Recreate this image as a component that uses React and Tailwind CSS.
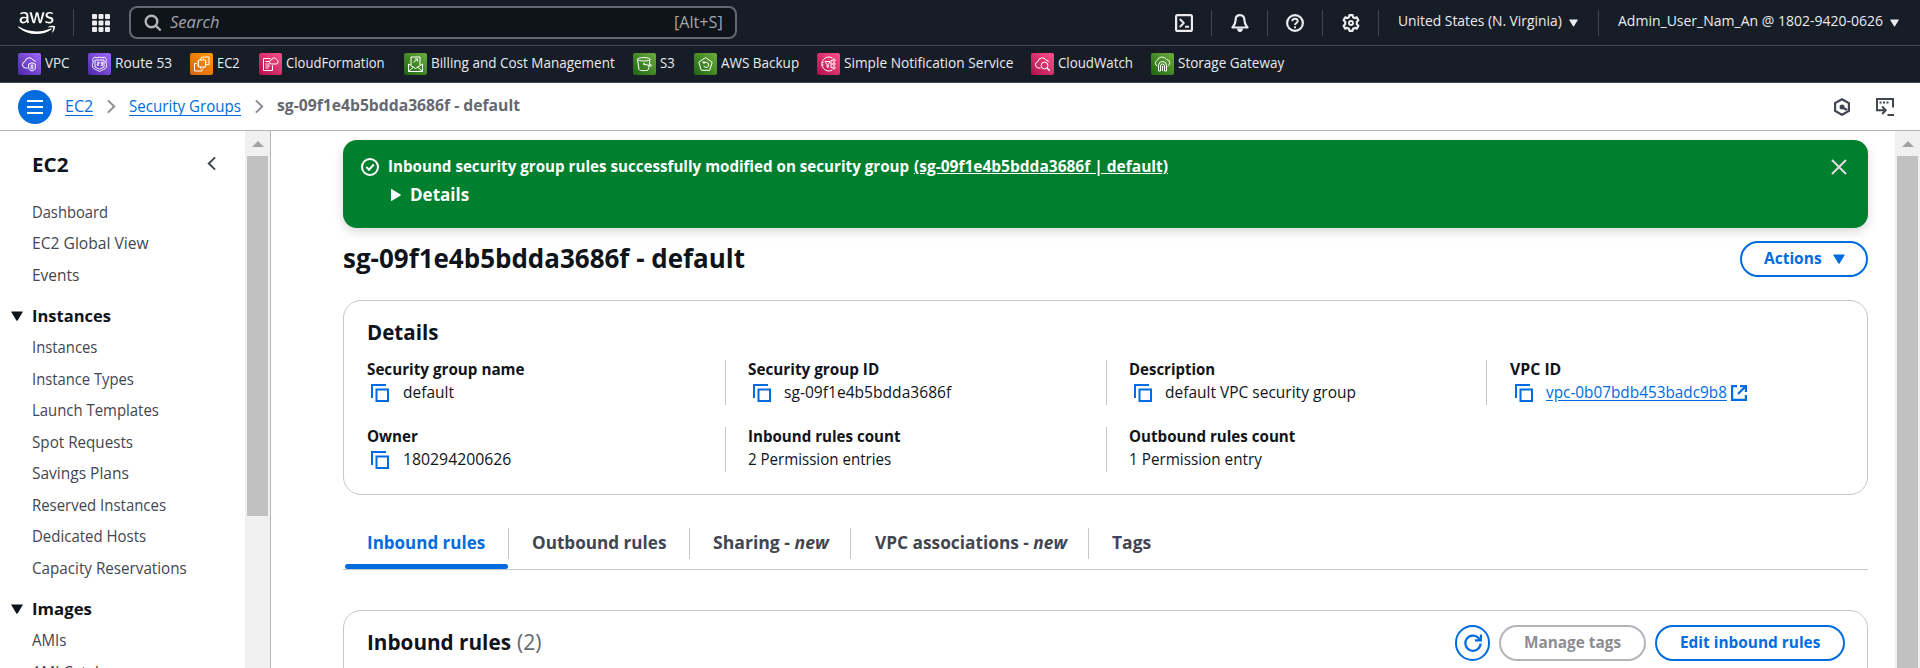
import { useLayoutEffect, useRef, useState } from "react";
import { FaAws } from "react-icons/fa";

/* Text set to a fixed measure: glyphs are condensed or widened to fill `w` pixels. */
function Fit({ w, className = "", children }) {
  const ref = useRef(null);
  const [scale, setScale] = useState(1);
  useLayoutEffect(() => {
    const natural = ref.current.offsetWidth;
    if (natural) setScale(w / natural);
  }, [w]);
  return (
    <span className={`inline-block shrink-0 whitespace-nowrap ${className}`} style={{ width: w }}>
      <span ref={ref} className="inline-block origin-left" style={{ transform: `scaleX(${scale})` }}>
        {children}
      </span>
    </span>
  );
}

function Down({ className }) {
  return (
    <svg viewBox="0 0 12 10" className={className} fill="currentColor">
      <path d="M.8.4h10.4c.5 0 .7.5.4.9L6.6 9.4c-.3.5-.9.5-1.2 0L.4 1.3C.1.9.3.4.8.4z" />
    </svg>
  );
}

const GRADIENTS = {
  purple: "bg-linear-to-tr from-[#4d27a8] to-[#a166ff]",
  orange: "bg-linear-to-tr from-[#d6620f] to-[#ff9900]",
  pink: "bg-linear-to-tr from-[#b0084d] to-[#ff4f8b]",
  green: "bg-linear-to-tr from-[#1b660f] to-[#6cae3e]",
};

const GLYPHS = {
  vpc: (
    <>
      <path d="M9.500 15H7.500a3.300 3.300 0 0 1-.5-6.500A4.300 4.300 0 0 1 15 7a2.600 2.600 0 0 1 2.500 2" />
      <path d="M14 9.800l3.300 1.200v4c0 1.500-1.300 2.300-3.300 3-2-.7-3.300-1.500-3.300-3v-4z M13.200 11.500v5M14.800 11.500v5" />
    </>
  ),
  route: (
    <>
      <path d="M6.500 4l2.500.9L11.500 4l2.500.9 2.500-.9 2 2.500-.8 2.500c.8 1.500 1.200 3 .6 5-.8 2.500-4.300 2.700-6.800 4.500-2.500-1.800-6-2-6.800-4.500-.6-2-.2-3.500.6-5L4.500 6.500z" />
      <path d="M7 7h9v7l-4.500 2.200L7 14z M9 9.200h2v1.600H9.200v1.500H11M12.500 9.200h1.800v3.100h-1.800M13 10.700h1.300" />
    </>
  ),
  ec2: (
    <>
      <path d="M8.500 7h7v7h-7z M8.500 9H7M8.500 12H7M15.500 9H17M15.500 12H17M10.500 7V5.500M13.500 7V5.500M10.500 14v1.500M13.500 14v1.500" />
      <path d="M11.500 5.500V4H19v7.500h-2 M7 10.500H4.500V18H12v-2.500" />
    </>
  ),
  cfn: (
    <>
      <path d="M11.500 5.500H4.500v12h9v-5 M6.500 8.500h3.500M6.500 11h4M6.500 13h4.500M6.500 15h3" />
      <path d="M12.500 11a2 2 0 0 1 0-4 2.600 2.600 0 0 1 5-.3 2.200 2.200 0 0 1-.3 4.300z" />
    </>
  ),
  billing: (
    <>
      <path d="M4.500 11v7.500h14V11 M4.500 11l7 4.500 7-4.500 M4.500 18.500l5-4.500M18.500 18.500l-5-4.500M7 12.500V4h9v8.500" />
      <path d="M9.500 9.500l4-3.500M11 6h2.500v2.500" />
    </>
  ),
  s3: (
    <>
      <path d="M4.500 6.500L6 16.500c.3 1.500 9.200 1.500 9.500 0l1.500-10" />
      <ellipse cx="10.800" cy="6.300" rx="6.300" ry="1.700" />
      <path d="M11 11l6.500 2c1.500.5 1.800-.8.3-1.500l-1.300-.5" />
      <circle cx="11" cy="11" r=".6" />
    </>
  ),
  backup: (
    <>
      <path d="M11.500 4.500l6.700 4.800-2.500 8H7.300l-2.500-8z" />
      <path d="M9 9.500h3.500a2.500 2.500 0 1 1-2.700 3.300M10.500 8L9 9.500l1.500 1.500" />
    </>
  ),
  sns: (
    <>
      <path d="M15.500 5A7 7 0 1 0 15.500 17M4.500 9.500h2M4.500 12h2M8 8.500h5l-1.800 3v3l-1.200-.7v-2.300z" />
      <circle cx="17" cy="7.200" r="1.200" />
      <circle cx="17" cy="11" r="1.200" />
      <circle cx="17" cy="14.800" r="1.200" />
      <path d="M15.800 11H14v-3.500h1.700M14 11v3.700h1.700" />
    </>
  ),
  cw: (
    <>
      <path d="M9.500 15H7.500a3.300 3.300 0 0 1-.5-6.500A4.300 4.300 0 0 1 15 7a2.600 2.600 0 0 1 2.500 2" />
      <circle cx="13.500" cy="12.500" r="3.400" />
      <path d="M16 15l2.800 2.700" strokeWidth="1.500" />
    </>
  ),
  sgw: (
    <>
      <path d="M6.300 13a3 3 0 0 1-.2-5.500A5.200 5.200 0 0 1 15.500 6.500a3.400 3.400 0 0 1 1.200 6.500" />
      <path d="M7.500 18v-5.500a4 4 0 0 1 8 0V18h-2v-5a2 2 0 0 0-4 0v5z M11.500 13v5" />
    </>
  ),
};

const FAVORITES = [
  ["VPC", 25, "vpc", "purple", "w-[70px]"],
  ["Route 53", 57, "route", "purple", "w-[102px]"],
  ["EC2", 23, "ec2", "orange", "w-[69px]"],
  ["CloudFormation", 99, "cfn", "pink", "w-[145px]"],
  ["Billing and Cost Management", 184, "billing", "green", "w-[229px]"],
  ["S3", 15, "s3", "green", "w-[61px]"],
  ["AWS Backup", 78, "backup", "green", "w-[123px]"],
  ["Simple Notification Service", 170, "sns", "pink", "w-[214px]"],
  ["CloudWatch", 75, "cw", "pink", "w-[120px]"],
  ["Storage Gateway", 106, "sgw", "green", "w-[140px]"],
];

function HeaderIcon({ children, width }) {
  return (
    <div className={`flex h-[26px] items-center justify-center border-r border-[#424650] ${width}`}>
      <svg viewBox="0 0 18 18" className="size-[18px]" fill="none" stroke="#ebebf0" strokeWidth="2.2" strokeLinejoin="round">
        {children}
      </svg>
    </div>
  );
}

function TopBar() {
  return (
    <div className="flex h-[46px] items-center border-b border-[#424650] text-[14px] text-[#ebebf0]">
      <FaAws className="ml-[18px] h-[30px] w-[37px] text-white" />
      <div className="ml-[18px] h-[27px] w-px bg-[#424650]" />
      <svg viewBox="0 0 18 18" className="ml-[18px] size-[18px]" fill="#ebebf0">
        {[0, 6.5, 13].map((y) =>
          [0, 6.5, 13].map((x) => <rect key={`${x}-${y}`} x={x} y={y} width="5" height="5" rx="1" />)
        )}
      </svg>
      <div className="ml-[19px] flex h-[33px] w-[608px] items-center rounded-[8px] border-2 border-[#656871] bg-[#0f141a] pr-[12px] pl-[13px] text-[15.5px] text-[#a4a4ad]">
        <svg viewBox="0 0 18 18" className="size-[18px]" fill="none" stroke="#b4b4bb" strokeWidth="2.4">
          <circle cx="7.500" cy="7.500" r="5.800" />
          <path d="M11.700 11.700l5 4.800" />
        </svg>
        <Fit w={49} className="ml-[8px] italic">Search</Fit>
        <Fit w={49} className="ml-auto">[Alt+S]</Fit>
      </div>
      <div className="ml-auto flex items-center">
        <HeaderIcon width="w-[56px]">
          <rect x="1.100" y="1.100" width="15.800" height="15.800" rx="1.500" />
          <path d="M4.800 5l4 4-4 4M10 12.700h4" strokeWidth="1.900" />
        </HeaderIcon>
        <HeaderIcon width="w-[56px]">
          <path d="M9 1.200C6 1.200 4.600 3.200 4.600 6c0 4-1.500 5.500-3.100 7.500h15c-1.600-2-3.100-3.500-3.100-7.500 0-2.800-1.400-4.800-4.400-4.800z" />
          <path d="M6 14.500c0 4.800 6 4.800 6 0z" fill="#ebebf0" stroke="none" />
        </HeaderIcon>
        <HeaderIcon width="w-[55px]">
          <circle cx="9" cy="9" r="7.900" />
          <path d="M6.300 7.300c0-3.600 5.400-3.300 5.400-.3 0 2-2.700 1.900-2.700 4M9 12.300v2" strokeWidth="1.900" />
        </HeaderIcon>
        <HeaderIcon width="w-[56px]">
          <path d="M7.400 1.200h3.200l.5 2 1.500.9 2.200-.7 1.600 2.800-1.600 1.500v2.600l1.600 1.500-1.600 2.800-2.200-.7-1.500.9-.5 2H7.400l-.5-2-1.500-.9-2.200.7-1.600-2.800 1.600-1.500V7.700L1.600 6.200l1.600-2.800 2.200.7 1.500-.9z" />
          <circle cx="9" cy="9" r="2" strokeWidth="1.900" />
        </HeaderIcon>
        <div className="flex h-[26px] w-[220px] items-center border-r border-[#424650] pb-[4px] pl-[19px]">
          <Fit w={164}>United States (N. Virginia)</Fit>
          <Down className="mt-[5px] ml-[7px] h-[8px] w-[9px]" />
        </div>
        <div className="flex h-[26px] w-[321px] items-center pb-[4px] pl-[19px]">
          <Fit w={265}>Admin_User_Nam_An @ 1802-9420-0626</Fit>
          <Down className="mt-[5px] ml-[7px] h-[8px] w-[9px]" />
        </div>
      </div>
    </div>
  );
}

function Favorites() {
  return (
    <div className="flex h-[37px] items-center border-b border-[#424650] pl-[18px] text-[14px] text-[#ebebf0]">
      {FAVORITES.map(([label, w, glyph, color, width]) => (
        <div key={label} className={`flex shrink-0 items-center gap-[4px] ${width}`}>
          <span className={`h-[22px] w-[23px] shrink-0 rounded-[2px] ${GRADIENTS[color]}`}>
            <svg viewBox="0 0 23 22" className="h-[22px] w-[23px]" fill="none" stroke="#fff" strokeWidth="1" strokeLinejoin="round">
              {GLYPHS[glyph]}
            </svg>
          </span>
          <Fit w={w} className="pb-[3px]">{label}</Fit>
        </div>
      ))}
    </div>
  );
}

function Chevron({ className }) {
  return (
    <svg viewBox="0 0 10 16" className={className} fill="none" stroke="currentColor" strokeWidth="2.2">
      <path d="M1 1.200L8 8l-7 6.800" />
    </svg>
  );
}

function Breadcrumbs() {
  return (
    <div className="flex h-[48px] items-center border-b border-[#b4b4bb] bg-white pl-[18px] text-[15.5px]">
      <div className="flex size-[34px] items-center justify-center rounded-full bg-[#006ce0]">
        <svg viewBox="0 0 16 14" className="h-[14px] w-[16px]" stroke="#fff" strokeWidth="2">
          <path d="M0 1h16M0 7h16M0 13h16" />
        </svg>
      </div>
      <Fit w={28} className="ml-[13px] h-[19px] border-b border-[#006ce0] leading-[18px] text-[#006ce0]">EC2</Fit>
      <Chevron className="ml-[14px] h-[15px] w-[9px] text-[#8c8c94]" />
      <Fit w={112} className="ml-[13px] h-[19px] border-b border-[#006ce0] leading-[18px] text-[#006ce0]">Security Groups</Fit>
      <Chevron className="ml-[14px] h-[15px] w-[9px] text-[#8c8c94]" />
      <Fit w={243} className="ml-[13px] pb-[1px] font-bold text-[#656871]">sg-09f1e4b5bdda3686f - default</Fit>
      <svg viewBox="0 0 18 18" className="mr-[25px] ml-auto size-[18px]" fill="none" stroke="#424650" strokeWidth="2.200">
        <path d="M9 1.200l6.900 3.900v7.800L9 16.800l-6.900-3.900V5.100z" />
        <circle cx="9" cy="9" r="2.500" fill="#424650" stroke="none" />
        <path d="M9 9l5 3" />
      </svg>
      <svg viewBox="0 0 18 18" className="mr-[26px] size-[18px]" fill="none" stroke="#424650" strokeWidth="2">
        <path d="M3.500 12.200H1V1h16v8.500" />
        <path d="M3.500 4.500h2M7 4.500h2M10.500 4.500h2" strokeWidth="2" />
        <path d="M3 12.200h6.500M6.200 8.500l3.500 3.700-3.500 3.800M11.500 17H18" />
      </svg>
    </div>
  );
}

function Scrollbar({ className, thumb }) {
  return (
    <div className={`flex shrink-0 flex-col items-center bg-[#f0f0f0] ${className}`}>
      <svg viewBox="0 0 12 6" className="mt-[10px] mb-[9px] h-[6px] w-[12px] shrink-0" fill="#a3a3a3">
        <path d="M6 0l6 6H0z" />
      </svg>
      <div className={`w-[21px] shrink-0 bg-[#c1c1c1] ${thumb}`} />
    </div>
  );
}

const NAV_TOP = [["Dashboard", 76], ["EC2 Global View", 117], ["Events", 47]];
const NAV_INSTANCES = [
  ["Instances", 65],
  ["Instance Types", 102],
  ["Launch Templates", 127],
  ["Spot Requests", 101],
  ["Savings Plans", 97],
  ["Reserved Instances", 134],
  ["Dedicated Hosts", 114],
  ["Capacity Reservations", 155],
];
const NAV_IMAGES = [["AMIs", 34], ["AMI Catalog", 84]];

function NavList({ items }) {
  return items.map(([label, w]) => (
    <div key={label} className="flex h-[31.5px] items-center pl-[32px]">
      <Fit w={w}>{label}</Fit>
    </div>
  ));
}

function NavHeading({ label, w }) {
  return (
    <div className="mt-[9.5px] flex h-[31.5px] items-center pl-[11px] text-[16.5px] font-bold text-[#0f141a]">
      <Down className="h-[10px] w-[12px]" />
      <Fit w={w} className="ml-[9px]">{label}</Fit>
    </div>
  );
}

function Sidebar() {
  return (
    <aside className="flex w-[271px] shrink-0 border-r border-[#b4b4bb]">
      <div className="h-full flex-1 overflow-hidden text-[15.5px] text-[#424650]">
        <div className="flex items-center pt-[19px] pr-[29px] pl-[32px] text-[#0f141a]">
          <Fit w={36} className="text-[20px] leading-[30px] font-bold">EC2</Fit>
          <Chevron className="mb-[3px] ml-auto h-[15px] w-[9px] rotate-180 text-[#424650]" />
        </div>
        <div className="mt-[16.5px]">
          <NavList items={NAV_TOP} />
          <NavHeading label="Instances" w={79} />
          <NavList items={NAV_INSTANCES} />
          <NavHeading label="Images" w={60} />
          <NavList items={NAV_IMAGES} />
        </div>
      </div>
      <Scrollbar className="w-[25px]" thumb="h-[360px]" />
    </aside>
  );
}

function Flash() {
  return (
    <div className="mt-[9px] flex h-[88px] shrink-0 items-start rounded-[14px] bg-[#00802f] pt-[18px] pr-[21px] pl-[18px] text-white shadow-[0_4px_10px_1px_rgba(0,7,22,0.13)]">
      <svg viewBox="0 0 18 18" className="size-[18px]" fill="none" stroke="#fff" strokeWidth="2">
        <circle cx="9" cy="9" r="8" />
        <path d="M5.300 9l2.700 2.700 4.800-5.200" />
      </svg>
      <div className="ml-[9px] flex flex-col">
        <div className="flex text-[15.5px] leading-[16px] font-bold">
          <Fit w={521}>Inbound security group rules successfully modified on security group</Fit>
          <Fit w={254} className="ml-[5px] [&>span]:underline [&>span]:underline-offset-1">(sg-09f1e4b5bdda3686f | default)</Fit>
        </div>
        <div className="mt-[10px] flex items-center pl-[3px] text-[17px] leading-[22px] font-bold">
          <svg viewBox="0 0 10 12" className="h-[12px] w-[10px]" fill="#fff">
            <path d="M0 .6C0 .1.5-.1.9.2l8.600 5.200c.5.3.5.9 0 1.200L.9 11.800c-.4.3-.9.1-.9-.4z" />
          </svg>
          <Fit w={59} className="ml-[9px]">Details</Fit>
        </div>
      </div>
      <svg viewBox="0 0 16 16" className="mt-[1px] ml-auto size-[16px]" stroke="#dedee3" strokeWidth="2">
        <path d="M1 1l14 14M15 1L1 15" />
      </svg>
    </div>
  );
}

function CopyIcon({ className }) {
  return (
    <svg viewBox="0 0 18 18" className={`size-[18px] shrink-0 ${className}`} fill="none" stroke="#006ce0" strokeWidth="2">
      <path d="M1 14V1h14" />
      <rect x="5.500" y="5.500" width="11.500" height="11.500" />
    </svg>
  );
}

function Field({ label, w, copy, first, className, children }) {
  return (
    <div className={`h-[45px] ${first ? "" : "border-l border-[#c6c6cd] pl-[22px]"} ${className}`}>
      <div className="flex h-[20px] items-center text-[15.5px] font-bold">
        <Fit w={w}>{label}</Fit>
      </div>
      <div className="flex h-[25px] items-center text-[15.5px]">
        {copy && <CopyIcon className={first ? "mr-[14px] ml-[4px]" : "mr-[13px] ml-[5px]"} />}
        {children}
      </div>
    </div>
  );
}

function DetailsCard() {
  return (
    <section className="mt-[23px] h-[195px] shrink-0 rounded-[18px] border border-[#c6c6cd] pt-[16px] pl-[23px]">
      <Fit w={71} className="block text-[22px] leading-[28px] font-bold">Details</Fit>
      <div className="mt-[14px] flex">
        <Field label="Security group name" w={158} copy first className="w-[358px]"><Fit w={51}>default</Fit></Field>
        <Field label="Security group ID" w={131} copy className="w-[381px]"><Fit w={167}>sg-09f1e4b5bdda3686f</Fit></Field>
        <Field label="Description" w={86} copy className="w-[380px]"><Fit w={191}>default VPC security group</Fit></Field>
        <Field label="VPC ID" w={51} copy className="w-[360px] pl-[23px]">
          <Fit w={181} className="text-[#006ce0] [&>span]:underline [&>span]:underline-offset-2">vpc-0b07bdb453badc9b8</Fit>
          <svg viewBox="0 0 16 16" className="ml-[4px] size-[16px]" fill="none" stroke="#006ce0" strokeWidth="2.200">
            <path d="M6 1.100H1.100v13.800h13.800V10M9 1.100h5.900V7M15 1L7 9" />
          </svg>
        </Field>
      </div>
      <div className="mt-[22px] flex">
        <Field label="Owner" w={51} copy first className="w-[358px]"><Fit w={108}>180294200626</Fit></Field>
        <Field label="Inbound rules count" w={152} className="w-[381px]"><Fit w={143}>2 Permission entries</Fit></Field>
        <Field label="Outbound rules count" w={166} className="w-[380px]"><Fit w={133}>1 Permission entry</Fit></Field>
      </div>
    </section>
  );
}

function Tabs() {
  return (
    <div className="mt-[33px] flex h-[42px] shrink-0 border-b border-[#c6c6cd] text-[17px] font-bold text-[#424650]">
      <div className="flex w-[165px] flex-col pl-[2px] text-[#006ce0]">
        <div className="flex h-[30px] items-center pl-[22px]"><Fit w={118}>Inbound rules</Fit></div>
        <div className="mt-[6px] h-[5px] rounded-full bg-[#006ce0]" />
      </div>
      <div className="flex h-[31px] w-[181px] items-center border-l border-[#c6c6cd] pb-[1px] pl-[23px]"><Fit w={134}>Outbound rules</Fit></div>
      <div className="flex h-[31px] w-[161px] items-center border-l border-[#c6c6cd] pb-[1px] pl-[23px]"><Fit w={116}>Sharing - <i>new</i></Fit></div>
      <div className="flex h-[31px] w-[238px] items-center border-l border-[#c6c6cd] pb-[1px] pl-[24px]"><Fit w={192}>VPC associations - <i>new</i></Fit></div>
      <div className="flex h-[31px] items-center border-l border-[#c6c6cd] pb-[1px] pl-[23px]"><Fit w={39}>Tags</Fit></div>
    </div>
  );
}

function RulesCard() {
  return (
    <section className="mt-[40px] flex h-[120px] shrink-0 items-start rounded-[18px] border border-[#c6c6cd] pt-[14px] pr-[22px] pl-[23px]">
      <div className="flex items-center pt-[2px] text-[22px] leading-[28px]">
        <Fit w={144} className="font-bold">Inbound rules</Fit>
        <Fit w={25} className="ml-[6px] text-[#656871]">(2)</Fit>
      </div>
      <div className="ml-auto flex gap-[9px] text-[15.5px] font-bold">
        <div className="flex h-[36px] w-[35px] items-center justify-center rounded-full border-2 border-[#006ce0]">
          <svg viewBox="0 0 18 18" className="size-[18px]" fill="none" stroke="#006ce0" strokeWidth="2.2">
            <path d="M16.600 9.500A7.600 7.600 0 1 1 14.800 4.300L16.500 6M17 .5v5.900h-6" />
          </svg>
        </div>
        <div className="flex h-[36px] w-[147px] items-center justify-center rounded-full border-2 border-[#b4b4bb] text-[#8c8c94]">
          <Fit w={97}>Manage tags</Fit>
        </div>
        <div className="flex h-[36px] w-[190px] items-center justify-center rounded-full border-2 border-[#006ce0] text-[#006ce0]">
          <Fit w={140}>Edit inbound rules</Fit>
        </div>
      </div>
    </section>
  );
}

export default function App() {
  return (
    <div className="flex h-[668px] w-[1920px] flex-col overflow-hidden bg-white font-['Open_Sans','Noto_Sans',sans-serif] text-[#0f141a]">
      <header className="shrink-0 bg-[#161d26]">
        <TopBar />
        <Favorites />
        <Breadcrumbs />
      </header>
      <div className="flex min-h-0 flex-1">
        <Sidebar />
        <main className="flex min-w-0 flex-1 flex-col overflow-hidden pr-[27px] pl-[72px]">
          <Flash />
          <div className="mt-[13px] flex h-[36px] shrink-0 items-center justify-between">
            <Fit w={402} className="pb-[3px] text-[27px] leading-[34px] font-bold">sg-09f1e4b5bdda3686f - default</Fit>
            <div className="flex h-[36px] w-[128px] items-center rounded-full border-2 border-[#006ce0] pl-[22px] text-[15.5px] font-bold text-[#006ce0]">
              <Fit w={58}>Actions</Fit>
              <Down className="ml-[11px] h-[10px] w-[12px]" />
            </div>
          </div>
          <DetailsCard />
          <Tabs />
          <RulesCard />
        </main>
        <Scrollbar className="w-[25px]" thumb="h-[600px]" />
      </div>
    </div>
  );
}
